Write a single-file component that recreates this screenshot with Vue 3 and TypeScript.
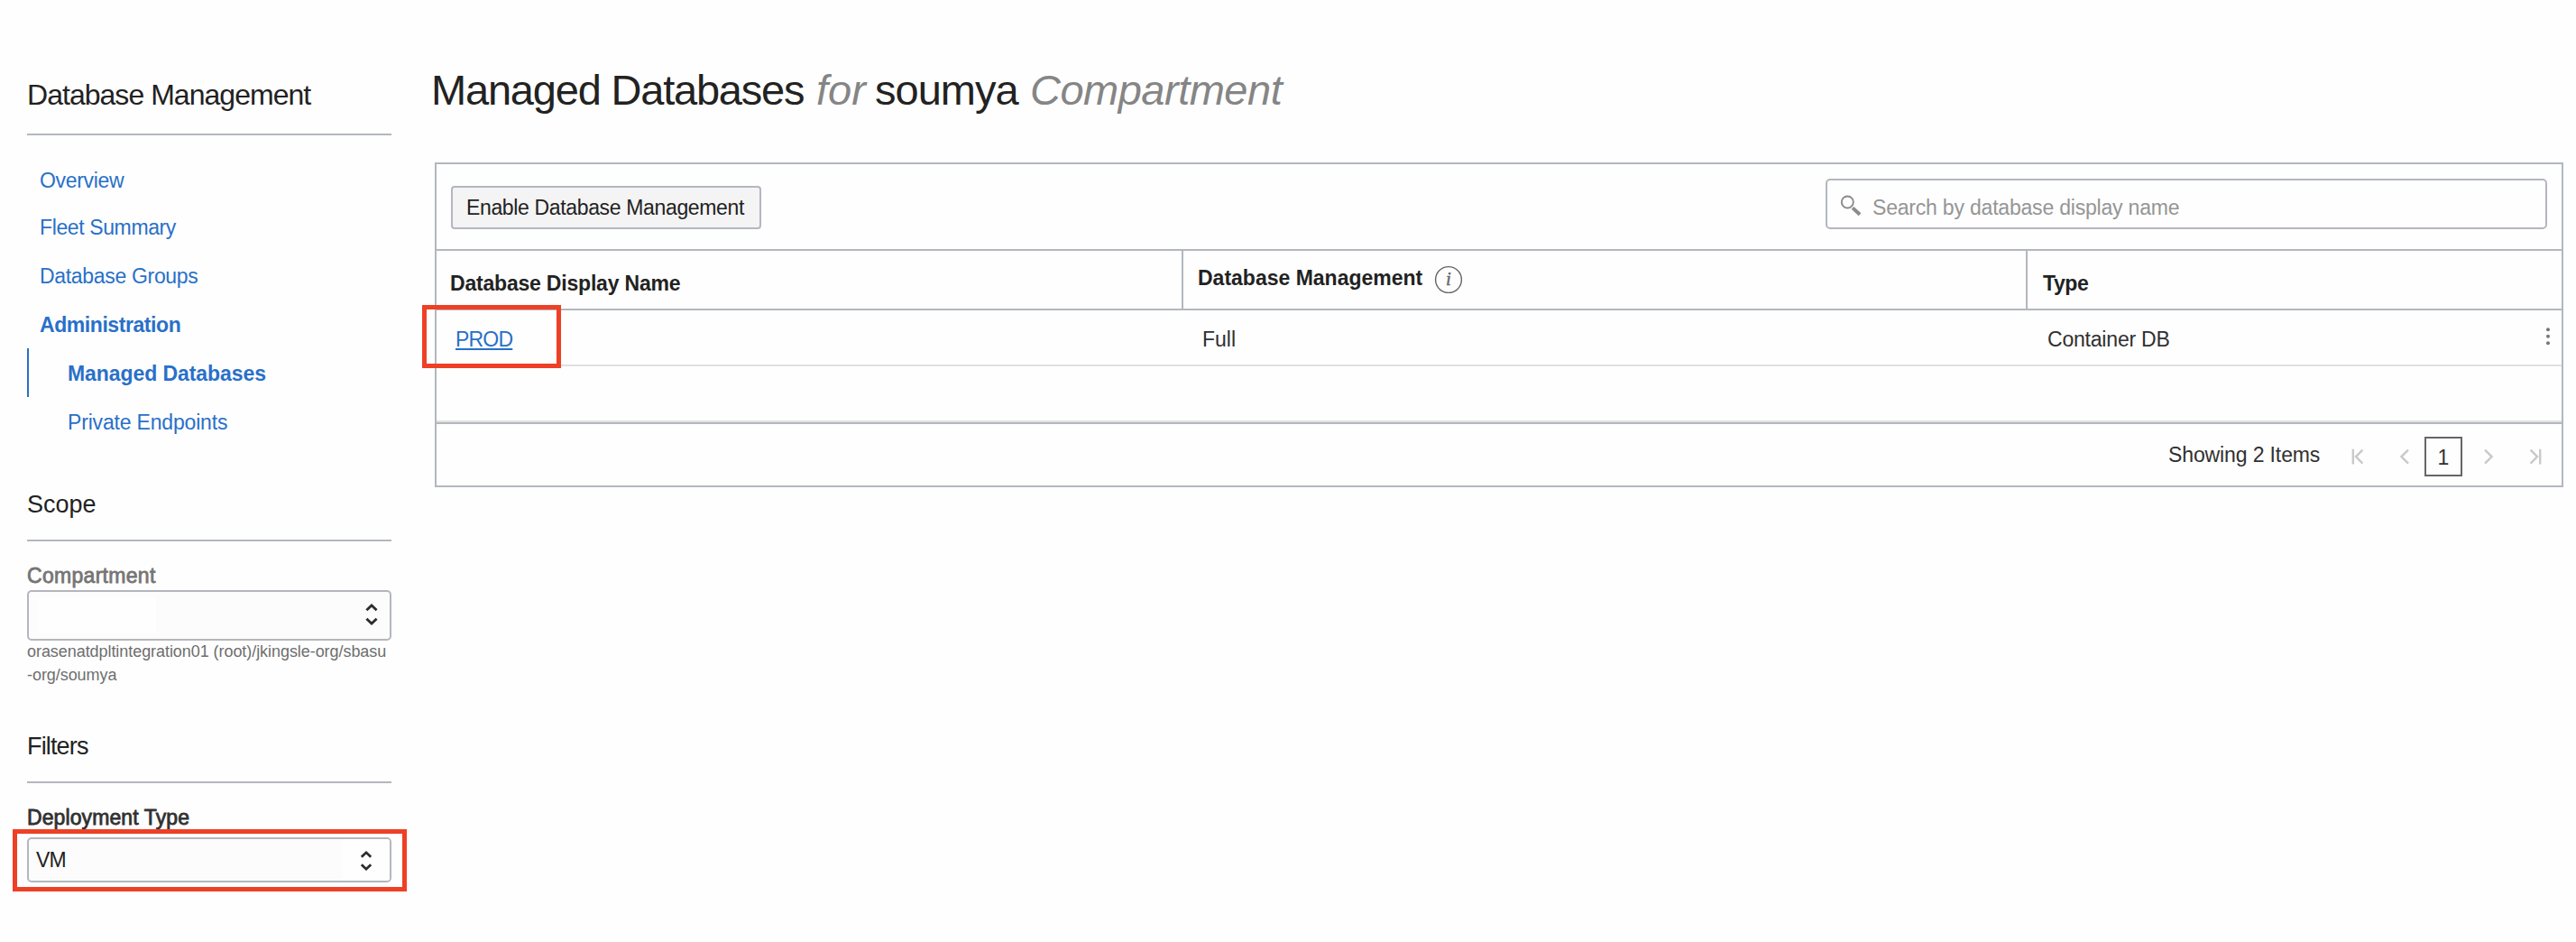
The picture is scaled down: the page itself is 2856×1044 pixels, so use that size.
<script setup lang="ts">
interface NavItem {
  label: string
  bold?: boolean
  nested?: boolean
  active?: boolean
  tracking: number
}

const nav: NavItem[] = [
  { label: 'Overview', tracking: -0.33 },
  { label: 'Fleet Summary', tracking: -0.38 },
  { label: 'Database Groups', tracking: -0.32 },
  { label: 'Administration', bold: true, tracking: -0.43 },
  { label: 'Managed Databases', bold: true, nested: true, active: true, tracking: -0.07 },
  { label: 'Private Endpoints', nested: true, tracking: -0.18 },
]
</script>

<template>
  <div class="page">
    <aside class="sidebar">
      <h2 class="side-title">Database Management</h2>
      <nav class="nav">
        <a
          v-for="item in nav"
          :key="item.label"
          class="nav-item"
          :class="{ bold: item.bold, nested: item.nested, active: item.active }"
          :style="{ letterSpacing: item.tracking + 'px' }"
        >{{ item.label }}</a>
      </nav>

      <h3 class="section scope">Scope</h3>
      <label class="label muted">Compartment</label>
      <div class="select compartment">
        <span class="blank"></span>
        <svg class="chev" width="16" height="26" viewBox="0 0 16 26">
          <path d="M2.4 8.3 8 3l5.6 5.3M2.4 17.7 8 23l5.6-5.3" />
        </svg>
      </div>
      <p class="path">orasenatdpltintegration01 (root)/jkingsle-org/sbasu<br>-org/soumya</p>

      <h3 class="section filters">Filters</h3>
      <label class="label deployment">Deployment Type</label>
      <div class="select type">
        <span class="value">VM</span>
        <span class="arrow">
          <svg class="chev" width="16" height="24" viewBox="0 0 16 24">
            <path d="M2.8 7.7 8 2.8l5.2 4.9M2.8 16.3 8 21.2l5.2-4.9" />
          </svg>
        </span>
        <span class="mark mark-type"></span>
      </div>
    </aside>

    <main class="main">
      <h1 class="heading">
        <span class="h-name">Managed Databases</span>
        <em class="h-for">for</em>
        <span class="h-comp">soumya</span>
        <em class="h-kind">Compartment</em>
      </h1>

      <section class="table">
        <div class="toolbar">
          <button class="enable" type="button">Enable Database Management</button>
          <div class="search">
            <svg width="24" height="26" viewBox="0 0 24 26">
              <circle cx="8.3" cy="9" r="6.5" fill="none" stroke="#8b8b8b" stroke-width="1.9" />
              <path d="M14 15.4 22 22.8" stroke="#8b8b8b" stroke-width="4" fill="none" />
            </svg>
            <span class="placeholder">Search by database display name</span>
          </div>
        </div>

        <div class="row head">
          <div class="cell"><span class="th-name">Database Display Name</span></div>
          <div class="cell raised">
            <span>Database Management</span>
            <svg class="info" width="32" height="32" viewBox="0 0 32 32">
              <circle cx="16" cy="16" r="14.4" fill="none" stroke="#666" stroke-width="1.4" />
              <text x="16" y="22.4" text-anchor="middle">i</text>
            </svg>
          </div>
          <div class="cell"><span class="th-type">Type</span></div>
        </div>

        <div class="row body">
          <div class="cell">
            <a class="link">PROD</a>
            <span class="mark mark-prod"></span>
          </div>
          <div class="cell">Full</div>
          <div class="cell last">
            <span class="container">Container DB</span>
            <svg class="dots" width="6" height="22" viewBox="0 0 6 22">
              <circle cx="3" cy="3.2" r="2" /><circle cx="3" cy="10.7" r="2" /><circle cx="3" cy="18.2" r="2" />
            </svg>
          </div>
        </div>
        <div class="row body empty"></div>

        <div class="footer">
          <span class="count">Showing 2 Items</span>
          <svg class="pager first" width="14" height="18" viewBox="0 0 14 18"><path d="M1.8 .8v16.6M12.4 1.6 5 9.1l7.4 7.5" /></svg>
          <svg class="pager prev" width="12" height="18" viewBox="0 0 12 18"><path d="M10 1.6 2.4 9.1l7.6 7.5" /></svg>
          <span class="current">1</span>
          <svg class="pager next" width="12" height="18" viewBox="0 0 12 18"><path d="M2 1.6 9.6 9.1 2 16.6" /></svg>
          <svg class="pager end" width="14" height="18" viewBox="0 0 14 18"><path d="M12.2 .8v16.6M1.6 1.6 9 9.1l-7.4 7.5" /></svg>
        </div>
      </section>
    </main>
  </div>
</template>

<style>
body {
  background: #fefefe;
}
</style>

<style scoped>
.page {
  display: flex;
  box-sizing: border-box;
  width: 2856px;
  height: 1044px;
  overflow: hidden;
  font-family: "Liberation Sans", Arial, sans-serif;
  font-size: 23px;
  color: #303030;
  white-space: nowrap;
}
.page * {
  box-sizing: border-box;
}
h1, h2, h3, p {
  margin: 0;
  font-weight: 400;
}

.sidebar {
  width: 404px;
  margin-left: 30px;
  padding-top: 60px;
  flex: none;
}
.side-title {
  height: 90px;
  line-height: 90px;
  font-size: 32px;
  letter-spacing: -0.97px;
  color: #222;
  border-bottom: 2px solid #b3b7be;
}
.nav {
  display: flex;
  flex-direction: column;
  margin-top: 22px;
}
.nav-item {
  height: 54px;
  line-height: 56px;
  padding-left: 14px;
  color: #2970c8;
}
.nav-item:first-child {
  height: 52px;
}
.nav-item.bold {
  font-weight: 700;
}
.nav-item.nested {
  padding-left: 45px;
}
.nav-item.active {
  padding-left: 43px;
  border-left: 2px solid #2970c8;
}
.section {
  height: 70px;
  line-height: 58px;
  font-size: 27px;
  color: #222;
  border-bottom: 2px solid #b3b7be;
}
.scope {
  margin-top: 36px;
}
.filters {
  margin-top: 37px;
  letter-spacing: -0.85px;
}
.label {
  display: block;
  height: 54px;
  line-height: 76px;
  letter-spacing: 0.3px;
  -webkit-text-stroke: 0.8px currentColor;
}
.label.muted {
  color: #757575;
}
.label.deployment {
  height: 60px;
  letter-spacing: 0.1px;
}
.select {
  position: relative;
  display: flex;
  align-items: center;
  justify-content: space-between;
  border: 2px solid #b3b7be;
  border-radius: 5px;
  background: #fcfcfc;
}
.select.compartment {
  height: 56px;
  padding: 0 12px 0 10px;
}
.blank {
  width: 131px;
  height: 40px;
  background: #fefefe;
}
.chev path {
  fill: none;
  stroke: #2c2c2c;
  stroke-width: 2.8;
}
.compartment .chev {
  margin-top: -3px;
}
.path {
  margin-top: -1px;
  height: 52px;
  line-height: 26px;
  font-size: 18px;
  letter-spacing: -0.06px;
  color: #6e6e6e;
}
.select.type {
  height: 50px;
}
.value {
  padding-left: 8px;
  line-height: 48px;
  letter-spacing: -0.9px;
  color: #222;
}
.arrow {
  display: flex;
  align-items: center;
  width: 52px;
  height: 46px;
  padding-left: 18px;
  background: #fefefe;
  border-radius: 3px;
}
.arrow .chev {
  margin-top: 1px;
}
.mark {
  position: absolute;
  border: 5px solid #ee4026;
}
.mark-type {
  left: -18px;
  top: -11px;
  width: 437px;
  height: 69px;
}

.main {
  width: 2360px;
  margin-left: 48px;
  padding-top: 60px;
}
.heading {
  display: flex;
  height: 120px;
  line-height: 79px;
  font-size: 47px;
  color: #222;
}
.heading em {
  color: #858585;
}
.h-name {
  width: 427px;
  margin-left: -4px;
  letter-spacing: -1.2px;
}
.h-for {
  width: 65px;
}
.h-comp {
  width: 172px;
  letter-spacing: -1px;
}
.h-kind {
  letter-spacing: -0.5px;
}

.table {
  height: 360px;
  border: 2px solid #b3b7be;
}
.toolbar {
  display: flex;
  justify-content: space-between;
  height: 96px;
  padding: 16px 16px 0;
  border-bottom: 2px solid #b3b7be;
}
.enable {
  width: 344px;
  height: 48px;
  margin-top: 8px;
  padding: 0 0 0 15px;
  text-align: left;
  line-height: 44px;
  font: inherit;
  letter-spacing: -0.35px;
  color: #222;
  background: #f4f4f4;
  border: 2px solid #b3b7be;
  border-radius: 4px;
}
.search {
  display: flex;
  width: 800px;
  height: 56px;
  padding: 15px 0 0 14px;
  border: 2px solid #b3b7be;
  border-radius: 5px;
}
.placeholder {
  margin: -1px 0 0 12px;
  line-height: 32px;
  letter-spacing: -0.2px;
  color: #959595;
}
.row {
  display: grid;
  grid-template-columns: 828px 936px 592px;
}
.head {
  height: 66px;
  grid-template-rows: 64px;
  font-weight: 700;
  color: #222;
  border-bottom: 2px solid #b3b7be;
}
.head .cell {
  padding-left: 15px;
  line-height: 72px;
  border-right: 2px solid #b3b7be;
}
.head .cell:last-child {
  border-right: 0;
  padding-left: 17px;
}
.head .raised {
  display: flex;
  padding-left: 16px;
  line-height: 60px;
}
.th-name {
  letter-spacing: -0.2px;
}
.th-type {
  letter-spacing: -0.4px;
}
.info {
  margin: 16px 0 0 13px;
}
.info text {
  font: italic 400 21px "Liberation Serif", serif;
  fill: #666;
  stroke: #666;
  stroke-width: 0.4;
}
.body {
  height: 62px;
  grid-template-rows: 60px;
  border-bottom: 2px solid #e0e0e0;
}
.body .cell {
  position: relative;
  padding-left: 21px;
  line-height: 64px;
}
.link {
  color: #2970c8;
  letter-spacing: -0.8px;
  text-decoration: underline;
  text-decoration-thickness: 2px;
  text-underline-offset: 2px;
}
.mark-prod {
  left: -16px;
  top: -6px;
  width: 154px;
  height: 70px;
}
.body .last {
  display: flex;
  justify-content: space-between;
  padding-left: 22px;
  padding-right: 12px;
}
.container {
  letter-spacing: -0.2px;
}
.dots {
  margin-top: 18px;
  fill: #777;
}
.footer {
  display: flex;
  height: 72px;
  border-top: 2px solid #b3b7be;
}
.count {
  width: 203px;
  margin-left: 1920px;
  line-height: 68px;
  letter-spacing: -0.12px;
}
.pager {
  margin-top: 27px;
  flex: none;
}
.pager path {
  fill: none;
  stroke: #c9c9c9;
  stroke-width: 2.4;
}
.prev {
  margin-left: 39px;
}
.current {
  width: 42px;
  height: 44px;
  margin: 14px 0 0 16px;
  line-height: 43px;
  text-align: center;
  border: 2px solid #666;
}
.next {
  margin-left: 23px;
}
.end {
  margin-left: 39px;
}
</style>
